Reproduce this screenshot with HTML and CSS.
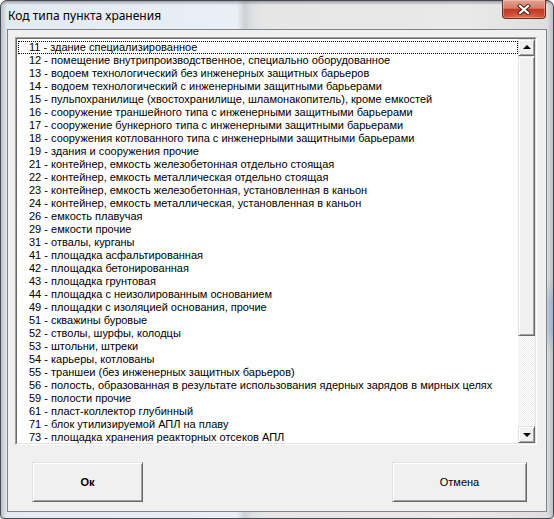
FILE: index.html
```html
<!DOCTYPE html>
<html lang="ru">
<head>
<meta charset="utf-8">
<title>Код типа пункта хранения</title>
<link rel="stylesheet" href="styles.css">
</head>
<body>
<div class="window">
  <div class="titlebar">
    <span class="title">Код типа пункта хранения</span>
    <div class="close" title="Закрыть">
      <svg width="14" height="11" viewBox="0 0 14 11">
        <path d="M3 2 L11 9 M11 2 L3 9" stroke="#4a2622" stroke-width="4.2" stroke-linecap="square" fill="none"/>
        <path d="M3 2 L11 9 M11 2 L3 9" stroke="#ffffff" stroke-width="2.2" stroke-linecap="square" fill="none"/>
      </svg>
    </div>
  </div>
  <div class="client">
    <div class="listbox">
      <div class="listbox-inner">
        <ul class="items">
          <li class="item focused">11 - здание специализированное</li>
          <li class="item">12 - помещение внутрипроизводственное, специально оборудованное</li>
          <li class="item">13 - водоем технологический без инженерных защитных барьеров</li>
          <li class="item">14 - водоем технологический с инженерными защитными барьерами</li>
          <li class="item">15 - пульпохранилище (хвостохранилище, шламонакопитель), кроме емкостей</li>
          <li class="item">16 - сооружение траншейного типа с инженерными защитными барьерами</li>
          <li class="item">17 - сооружение бункерного типа с инженерными защитными барьерами</li>
          <li class="item">18 - сооружения котлованного типа с инженерными защитными барьерами</li>
          <li class="item">19 - здания и сооружения прочие</li>
          <li class="item">21 - контейнер, емкость железобетонная отдельно стоящая</li>
          <li class="item">22 - контейнер, емкость металлическая отдельно стоящая</li>
          <li class="item">23 - контейнер, емкость железобетонная, установленная в каньон</li>
          <li class="item">24 - контейнер, емкость металлическая, установленная в каньон</li>
          <li class="item">26 - емкость плавучая</li>
          <li class="item">29 - емкости прочие</li>
          <li class="item">31 - отвалы, курганы</li>
          <li class="item">41 - площадка асфальтированная</li>
          <li class="item">42 - площадка бетонированная</li>
          <li class="item">43 - площадка грунтовая</li>
          <li class="item">44 - площадка с неизолированным основанием</li>
          <li class="item">49 - площадки с изоляцией основания, прочие</li>
          <li class="item">51 - скважины буровые</li>
          <li class="item">52 - стволы, шурфы, колодцы</li>
          <li class="item">53 - штольни, штреки</li>
          <li class="item">54 - карьеры, котлованы</li>
          <li class="item">55 - траншеи (без инженерных защитных барьеров)</li>
          <li class="item">56 - полость, образованная в результате использования ядерных зарядов в мирных целях</li>
          <li class="item">59 - полости прочие</li>
          <li class="item">61 - пласт-коллектор глубинный</li>
          <li class="item">71 - блок утилизируемой АПЛ на плаву</li>
          <li class="item">73 - площадка хранения реакторных отсеков АПЛ</li>
        </ul>
        <div class="vscroll">
          <div class="sbtn"><span class="arrow up"></span></div>
          <div class="track"><div class="thumb"></div></div>
          <div class="sbtn"><span class="arrow down"></span></div>
        </div>
      </div>
    </div>
    <div class="actions">
      <button class="btn ok">Ок</button>
      <button class="btn cancel">Отмена</button>
    </div>
  </div>
</div>
</body>
</html>
```
FILE: styles.css
```css
html, body {
  margin: 0;
  padding: 0;
  background: #ffffff;
}

/* Aero-style window frame */
.window {
  width: 554px;
  height: 519px;
  box-sizing: border-box;
  border: 1px solid #454a52;
  border-radius: 7px 7px 4px 4px;
  padding: 0 6px 6px 6px;
  display: flex;
  flex-direction: column;
  background:
    linear-gradient(to bottom, rgba(70, 74, 80, 0.45) 0, rgba(70, 74, 80, 0) 4px),
    linear-gradient(to right, rgba(110, 118, 128, 0.35) 0, rgba(110, 118, 128, 0) 6px, rgba(0, 0, 0, 0) 546px, rgba(110, 118, 128, 0.3) 552px),
    linear-gradient(to bottom, rgba(0, 0, 0, 0) 280px, rgba(150, 185, 225, 0.55) 300px, rgba(150, 185, 225, 0.55) 330px, rgba(0, 0, 0, 0) 350px) right / 8px 100% no-repeat,
    linear-gradient(to right, #e3eaf1 0, #e9eff5 236px, #cdd1d5 244px, #dcdfe2 250px, #e6e6e6 262px, #e9e9e9 470px, #dddddd 554px);
  font-family: "Liberation Sans", Arial, sans-serif;
}

.titlebar {
  height: 28px;
  flex: none;
  display: flex;
  justify-content: space-between;
  align-items: flex-start;
}

.title {
  font-family: "Noto Sans", "Open Sans", sans-serif;
  font-size: 12px;
  line-height: 16px;
  color: #000;
  padding: 7px 0 0 1px;
}

.close {
  width: 44px;
  height: 19px;
  box-sizing: border-box;
  margin: -1px 1px 0 0;
  border: 1px solid #6e2a22;
  border-top: none;
  border-radius: 0 0 4px 4px;
  display: flex;
  align-items: center;
  justify-content: center;
  background:
    radial-gradient(ellipse 60% 45% at 50% 100%, rgba(240, 120, 80, 0.8), rgba(240, 120, 80, 0) 100%),
    linear-gradient(to bottom, #e4a293 0, #d77c68 45%, #c13c28 52%, #c44630 100%);
  box-shadow: inset 0 0 0 1px rgba(255, 220, 210, 0.4);
}

.close svg {
  display: block;
}

/* Client area of the dialog */
.client {
  flex: 1;
  border: 1px solid #7f858c;
  background: #f0f0f0;
  padding: 7px 0 0 7px;
  display: flex;
  flex-direction: column;
}

/* Sunken list box */
.listbox {
  width: 522px;
  height: 408px;
  box-sizing: border-box;
  border: 1px solid;
  border-color: #a0a0a0 #ffffff #ffffff #a0a0a0;
}

.listbox-inner {
  height: 100%;
  box-sizing: border-box;
  border: 1px solid;
  border-color: #696969 #e3e3e3 #e3e3e3 #696969;
  background: #ffffff;
  display: flex;
}

.items {
  flex: 1;
  margin: 0;
  padding: 2px 0 0 0;
  list-style: none;
  overflow: hidden;
}

.item {
  height: 13px;
  box-sizing: border-box;
  line-height: 13px;
  font-size: 11px;
  color: #000;
  padding-left: 11px;
  white-space: nowrap;
  margin-left: 1px;
}

.item.focused {
  border: 1px dotted #000;
  line-height: 11px;
  padding-left: 10px;
}

/* Classic vertical scrollbar */
.vscroll {
  width: 17px;
  flex: none;
  display: flex;
  flex-direction: column;
}

.sbtn,
.thumb {
  box-sizing: border-box;
  background: #f0f0f0;
  border: 1px solid;
  border-color: #e3e3e3 #696969 #696969 #e3e3e3;
  box-shadow: inset 1px 1px 0 #ffffff, inset -1px -1px 0 #a0a0a0;
}

.sbtn {
  height: 17px;
  flex: none;
  display: flex;
  align-items: center;
  justify-content: center;
}

.arrow {
  width: 0;
  height: 0;
  border-left: 4px solid transparent;
  border-right: 4px solid transparent;
}

.arrow.up {
  border-bottom: 4px solid #000;
  margin-top: -1px;
}

.arrow.down {
  border-top: 4px solid #000;
}

.track {
  flex: 1;
  background: repeating-conic-gradient(#ffffff 0 25%, #ebebeb 0 50%) 0 0 / 2px 2px;
}

.thumb {
  height: 280px;
}

/* Dialog buttons */
.actions {
  display: flex;
  justify-content: space-between;
  margin-top: 17px;
  padding-left: 17px;
  width: 495px;
}

.btn {
  height: 40px;
  box-sizing: border-box;
  margin: 0;
  padding: 0;
  font-family: "Liberation Sans", Arial, sans-serif;
  font-size: 11px;
  color: #000;
  background: #f0f0f0;
  border: 1px solid;
  border-color: #e3e3e3 #696969 #696969 #e3e3e3;
  box-shadow: inset 1px 1px 0 #ffffff, inset -1px -1px 0 #a0a0a0;
}

.btn.ok {
  width: 111px;
  font-weight: bold;
}

.btn.cancel {
  width: 135px;
}
```
